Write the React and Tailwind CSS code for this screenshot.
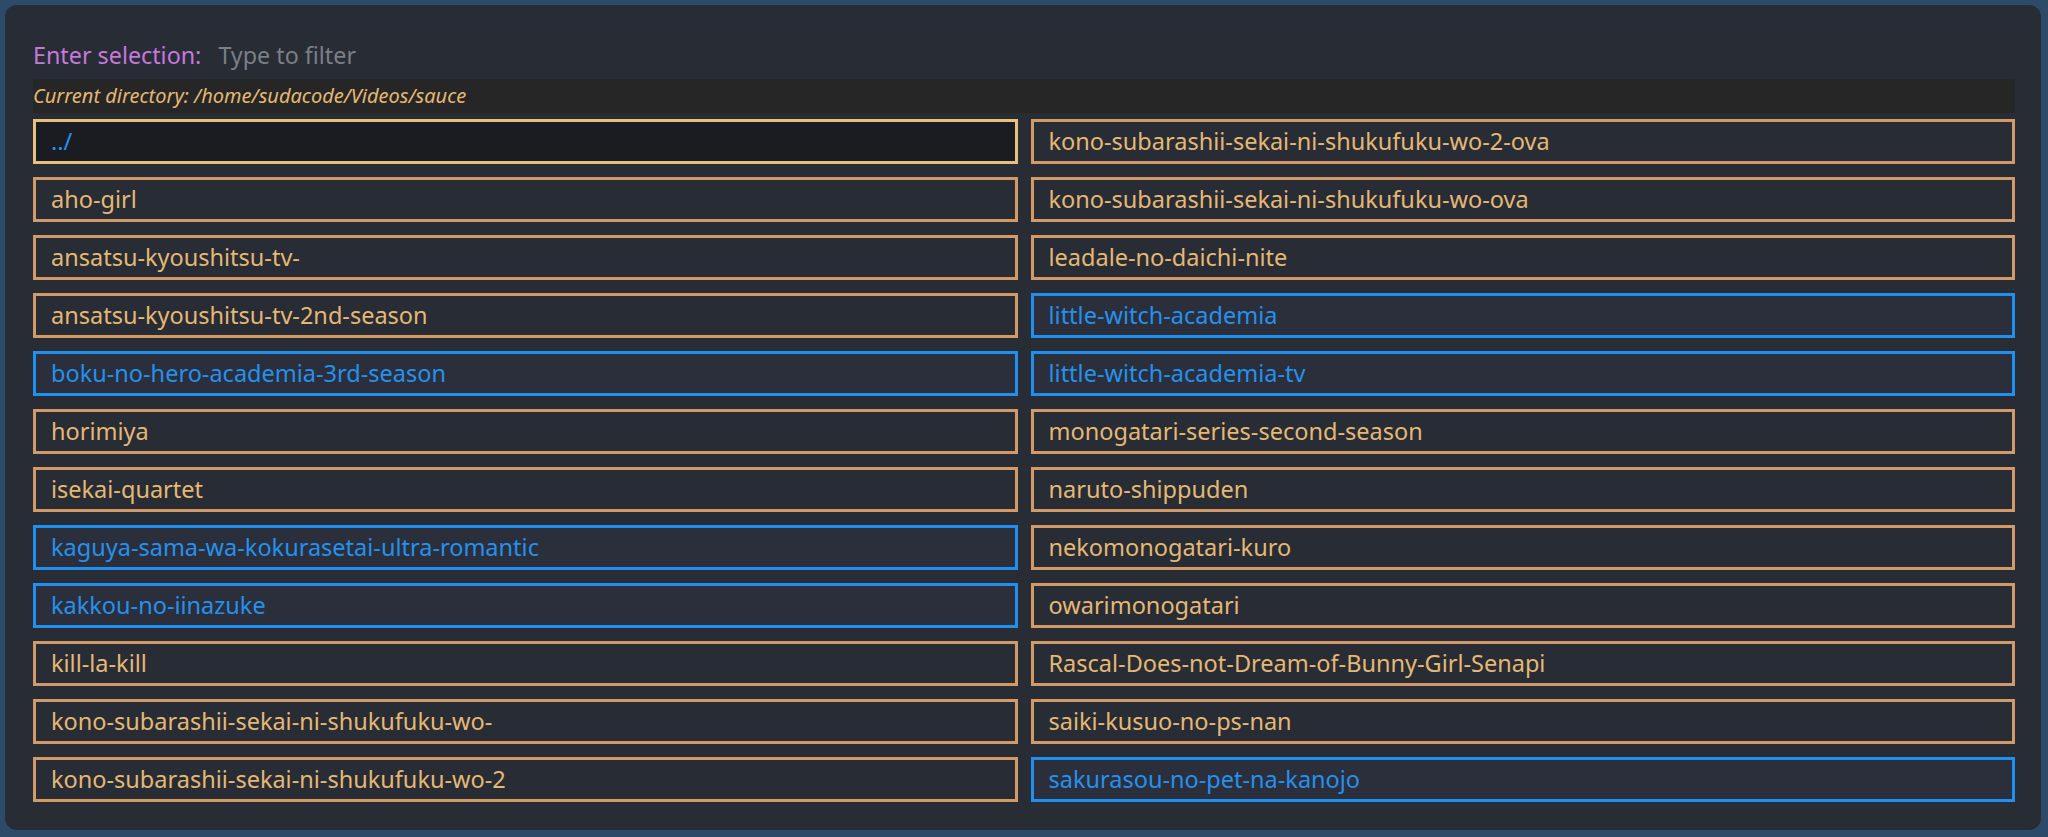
import React from "react";

const left = [
  { t: "../", c: "sel" },
  { t: "aho-girl" },
  { t: "ansatsu-kyoushitsu-tv-" },
  { t: "ansatsu-kyoushitsu-tv-2nd-season" },
  { t: "boku-no-hero-academia-3rd-season", c: "blue" },
  { t: "horimiya" },
  { t: "isekai-quartet" },
  { t: "kaguya-sama-wa-kokurasetai-ultra-romantic", c: "blue" },
  { t: "kakkou-no-iinazuke", c: "blue" },
  { t: "kill-la-kill" },
  { t: "kono-subarashii-sekai-ni-shukufuku-wo-" },
  { t: "kono-subarashii-sekai-ni-shukufuku-wo-2" },
];
const right = [
  { t: "kono-subarashii-sekai-ni-shukufuku-wo-2-ova" },
  { t: "kono-subarashii-sekai-ni-shukufuku-wo-ova" },
  { t: "leadale-no-daichi-nite" },
  { t: "little-witch-academia", c: "blue" },
  { t: "little-witch-academia-tv", c: "blue" },
  { t: "monogatari-series-second-season" },
  { t: "naruto-shippuden" },
  { t: "nekomonogatari-kuro" },
  { t: "owarimonogatari" },
  { t: "Rascal-Does-not-Dream-of-Bunny-Girl-Senapi" },
  { t: "saiki-kusuo-no-ps-nan" },
  { t: "sakurasou-no-pet-na-kanojo", c: "blue" },
];

function Item({ t, c }) {
  if (c === "sel") {
    return (
      <div className="h-[45px] border-[3px] border-[#e9bf7b] bg-[#1b1c21] flex items-center pl-[15px] text-[#2591ee]">
        {t}
      </div>
    );
  }
  if (c === "blue") {
    return (
      <div className="h-[45px] border-[3px] border-[#1f8ff0] bg-[#2b2f3b] flex items-center pl-[15px] text-[#2591ee]">
        {t}
      </div>
    );
  }
  return (
    <div className="h-[45px] border-[3px] border-[#d19a66] flex items-center pl-[15px] text-[#e5b874]">
      {t}
    </div>
  );
}

export default function App() {
  return (
    <div
      className="w-[2048px] h-[837px] bg-[#2d4a69] pl-[5px] pt-[5px] pr-[7px] pb-[7px]"
      style={{ fontFamily: '"Noto Sans", "Open Sans", sans-serif' }}
    >
      <div className="w-full h-full rounded-[12px] bg-[#282c35] pl-[28px] pr-[26px] pt-[25px]">
        <div className="h-[49px] flex items-center text-[23.3px] leading-[30px]">
          <span className="text-[#c678dd]">Enter selection:</span>
          <span className="ml-[17px] text-[#7b7f87]">Type to filter</span>
        </div>
        <div className="h-[34px] bg-[#262626] flex items-center text-[20px] italic text-[#e5b874]">
          Current directory: /home/sudacode/Videos/sauce
        </div>
        <div className="mt-[6px] grid grid-cols-2 gap-x-[13px] text-[23.5px]">
          <div className="flex flex-col gap-[13px]">
            {left.map((it, i) => (
              <Item key={i} {...it} />
            ))}
          </div>
          <div className="flex flex-col gap-[13px]">
            {right.map((it, i) => (
              <Item key={i} {...it} />
            ))}
          </div>
        </div>
      </div>
    </div>
  );
}
